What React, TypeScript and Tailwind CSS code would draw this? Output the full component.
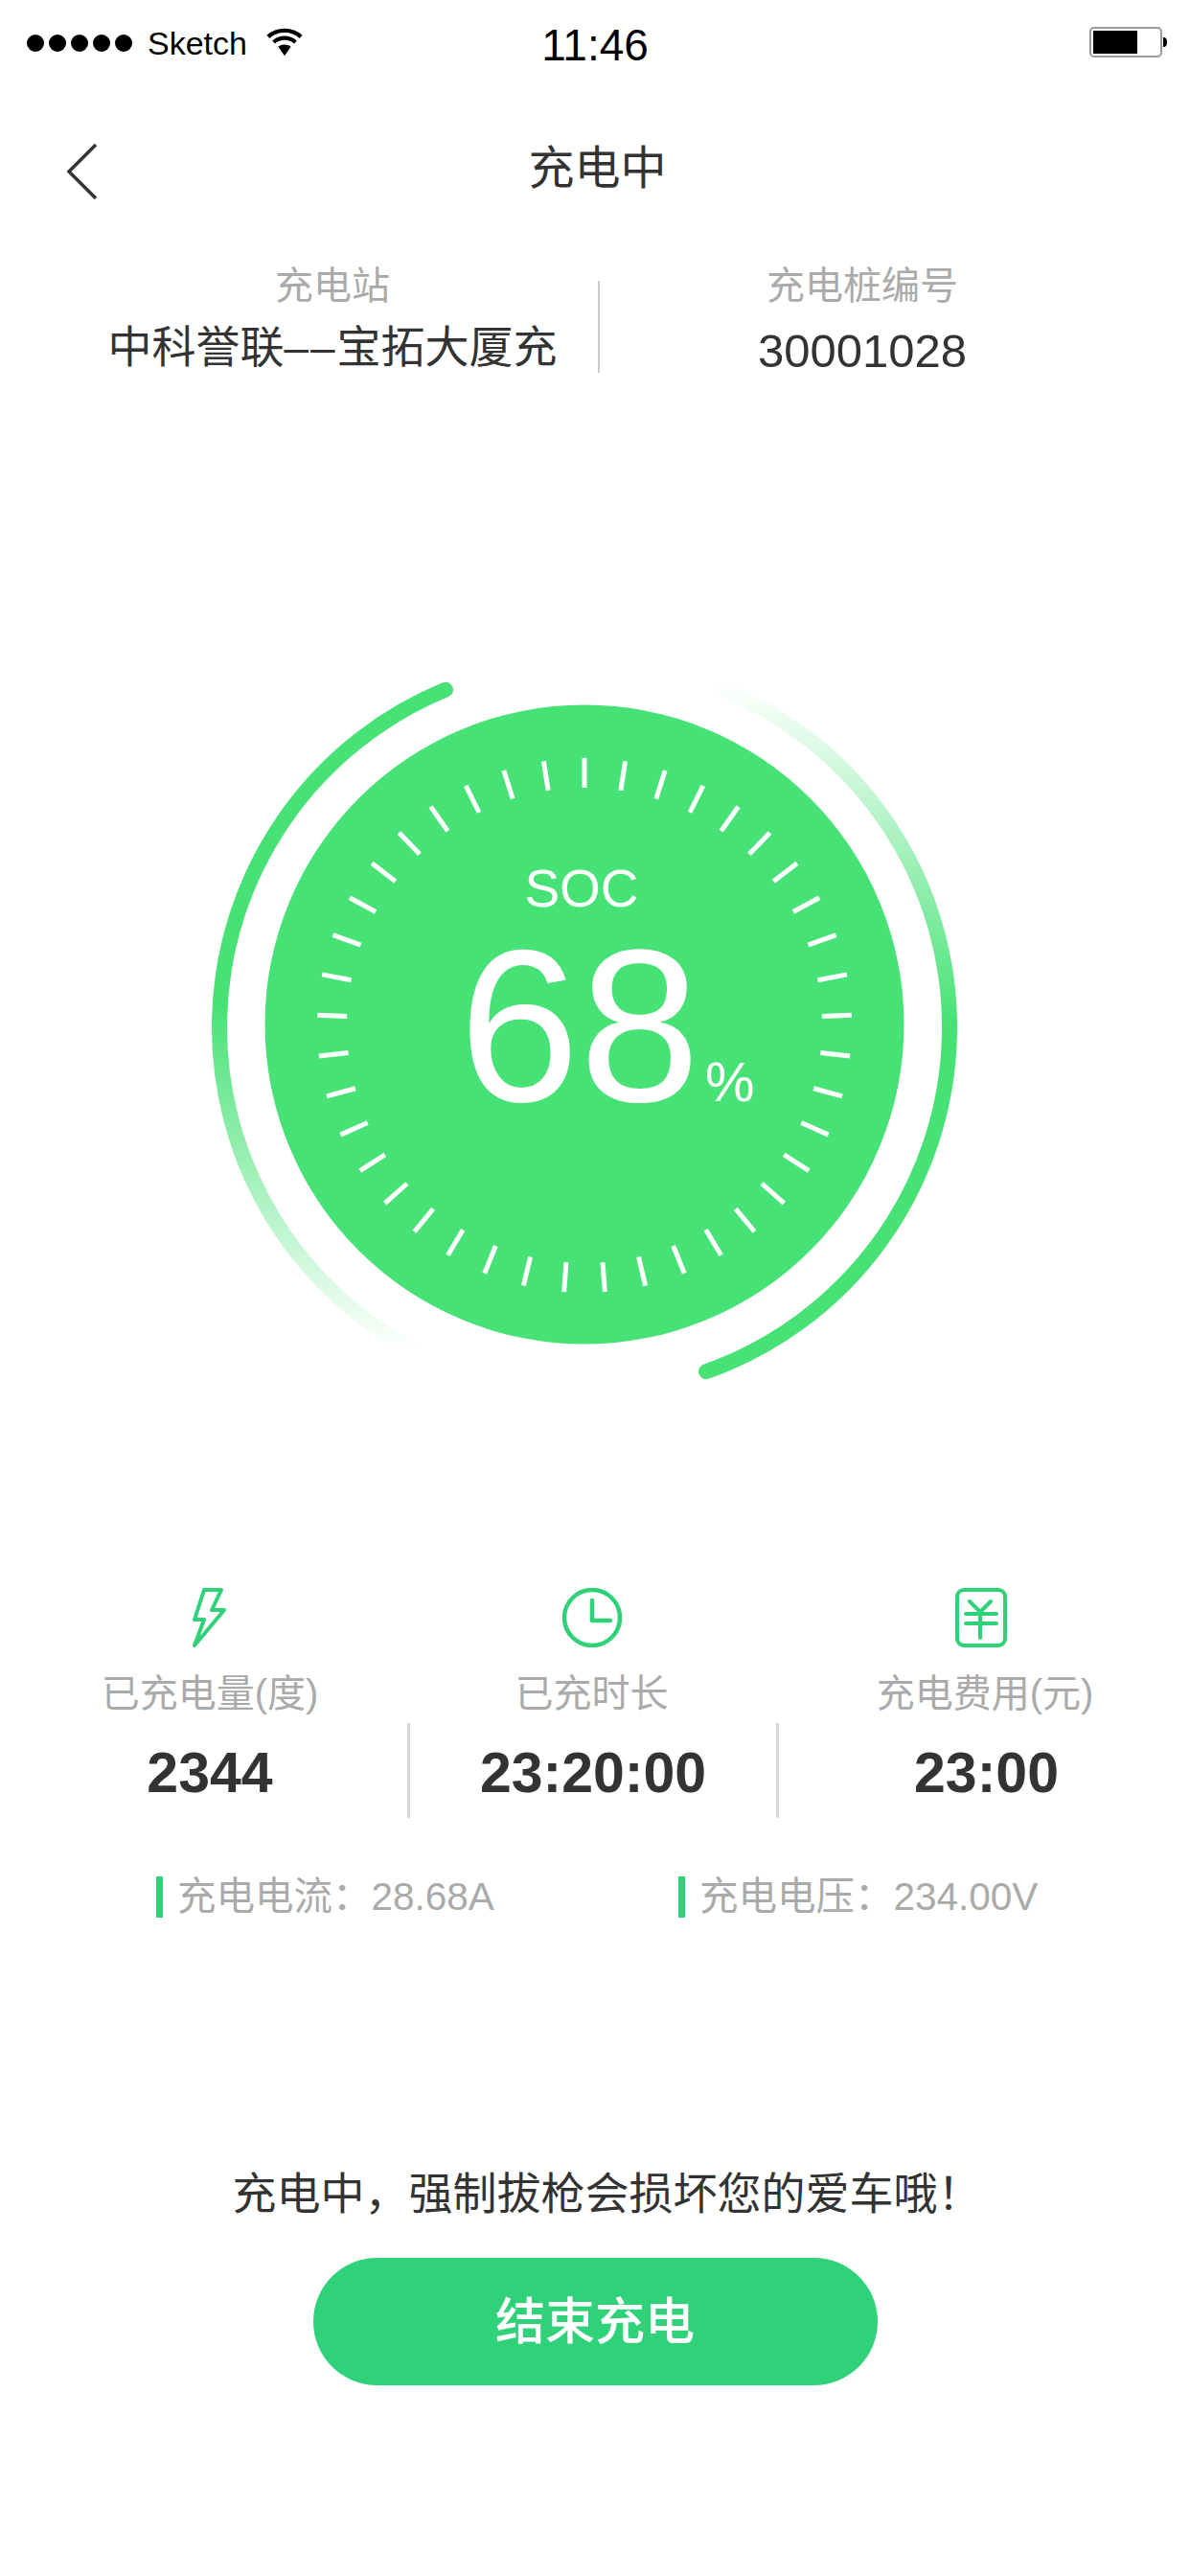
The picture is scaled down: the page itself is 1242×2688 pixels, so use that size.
const CX = 400;
const CY = 401;

const ticks = Array.from({ length: 41 }, (_, i) => (i * 360) / 41);

const polar = (deg: number, r: number) => {
  const a = (deg * Math.PI) / 180;
  return { x: CX + r * Math.sin(a), y: CY - r * Math.cos(a) };
};

const Gauge = () => (
  <div className="relative mt-[279px] ml-[210px] h-[800px] w-[800px] self-start">
    <svg width="800" height="800" viewBox="0 0 800 800" className="block">
      <defs>
        <linearGradient id="fadeLeft" gradientUnits="userSpaceOnUse" x1="0" y1="378" x2="0" y2="740">
          <stop offset="0" stopColor="#46e275" />
          <stop offset="1" stopColor="#46e275" stopOpacity="0" />
        </linearGradient>
        <linearGradient id="fadeRight" gradientUnits="userSpaceOnUse" x1="0" y1="400" x2="0" y2="45">
          <stop offset="0" stopColor="#46e275" />
          <stop offset="1" stopColor="#46e275" stopOpacity="0" />
        </linearGradient>
      </defs>
      <circle cx="400" cy="400" r="333.5" fill="#46e275" />
      {ticks.map((deg) => {
        const a = polar(deg, 248);
        const b = polar(deg, 279);
        return <line key={deg} x1={a.x} y1={a.y} x2={b.x} y2={b.y} stroke="#ffffff" strokeWidth="5" />;
      })}
      {/* left arc, fades out towards the bottom */}
      <path d="M 255 50.7 A 381 381 0 0 0 237 747.4" fill="none" stroke="url(#fadeLeft)" strokeWidth="16" strokeLinecap="round" />
      {/* right arc, fades out towards the top */}
      <path d="M 527 762.2 A 381 381 0 0 0 541 49" fill="none" stroke="url(#fadeRight)" strokeWidth="16" strokeLinecap="round" />
    </svg>
    <div className="absolute inset-0 text-white">
      <div className="absolute left-0 right-0 top-[228px] pr-[6px] text-center text-[55px] leading-[60px]">SOC</div>
      <div className="absolute left-[269px] top-[317px] text-[226px] leading-[170px]">68</div>
      <div className="absolute left-[526px] top-[430px] text-[58px] leading-[60px]">%</div>
    </div>
  </div>
);

const BoltIcon = () => (
  <svg width="36" height="62" viewBox="0 0 36 62" fill="none" stroke="#2fd278" strokeWidth="4" strokeLinejoin="round" className="block">
    <polygon points="12,2 30,2 20,23 33,23 2,60 12,33 2,33" />
  </svg>
);

const ClockIcon = () => (
  <svg width="62" height="62" viewBox="0 0 62 62" fill="none" stroke="#2fd278" strokeWidth="4.5" strokeLinecap="round" strokeLinejoin="round" className="block">
    <circle cx="31" cy="31" r="29" />
    <path d="M31 13V34H50" />
  </svg>
);

const YenIcon = () => (
  <svg width="54" height="62" viewBox="0 0 54 62" fill="none" stroke="#2fd278" strokeWidth="4" strokeLinecap="round" strokeLinejoin="round" className="mr-[8px] block">
    <rect x="2" y="2" width="50" height="58" rx="7" />
    <path d="M15 14L26 25L37 14M11 27H43M11 37H43M26 25V52" />
  </svg>
);

const StatusBar = () => (
  <div className="mt-[15px] grid h-[60px] grid-cols-[1fr_auto_1fr] items-center text-black">
    <div className="flex items-center pl-[28px]">
      <div className="flex gap-[5px]">
        {[0, 1, 2, 3, 4].map((i) => (
          <span key={i} className="h-[18px] w-[18px] rounded-full bg-black" />
        ))}
      </div>
      <span className="ml-[16px] text-[34px] leading-[40px]">Sketch</span>
      <svg width="38" height="30" viewBox="0 0 40 30" fill="none" stroke="#000" strokeWidth="4.5" className="ml-[20px] -mt-[2px] block">
        <path d="M2 9C12 0 28 0 38 9" />
        <path d="M8 15C15 9 25 9 32 15" />
        <path d="M20 30L13 20C17 17 23 17 27 20Z" fill="#000" stroke="none" />
      </svg>
    </div>
    <span className="mt-[3px] text-[46px] leading-[50px]">11:46</span>
    <div className="flex justify-end pr-[24px]">
      <svg width="81" height="32" viewBox="0 0 81 32" className="-mt-[2px] block">
        <rect x="1" y="1" width="74" height="30" rx="4" fill="none" stroke="#9a9a9a" strokeWidth="2" />
        <rect x="4" y="4" width="46" height="24" fill="#000" />
        <path d="M77 11C80 11 81 13 81 16C81 19 80 21 77 21Z" fill="#000" />
      </svg>
    </div>
  </div>
);

const Reading = ({ text, className }: { text: string; className: string }) => (
  <div className={`flex h-[43px] items-center ${className}`}>
    <span className="h-full w-[7px] bg-[#2fd278]" />
    <span className="ml-[15px] text-[40.5px] leading-[43px] text-[#aaaaaa]">{text}</span>
  </div>
);

export default function App() {
  return (
    <div className="flex h-[2688px] w-[1242px] flex-col overflow-hidden bg-white font-['Liberation_Sans','Noto_Sans_CJK_SC',sans-serif]">
      <StatusBar />

      <div className="mt-[56px] grid h-[90px] grid-cols-[1fr_auto_1fr] items-center">
        <svg width="34" height="60" viewBox="0 0 34 60" fill="none" stroke="#333" strokeWidth="3.5" className="mt-[6px] ml-[69px] block">
          <path d="M31 2L3 30L31 58" />
        </svg>
        <h1 className="ml-[5px] text-[48px] leading-[60px] font-normal text-[#333333]">充电中</h1>
        <span />
      </div>

      {/* station info */}
      <div className="mt-[53px] grid grid-cols-[624px_2px_1fr]">
        <div className="pl-[70px] text-center">
          <div className="text-[40px] leading-[48px] text-[#aaaaaa]">充电站</div>
          <div className="mt-[16px] text-[46px] leading-[48px] text-[#333333]">
            中科誉联<span className="tracking-[2px]">––</span>宝拓大厦充
          </div>
        </div>
        <div className="mt-[19px] h-[96px] bg-[#cccccc]" />
        <div className="pr-[68px] text-center">
          <div className="text-[40px] leading-[48px] text-[#aaaaaa]">充电桩编号</div>
          <div className="mt-[20px] text-[49px] leading-[48px] text-[#333333]">30001028</div>
        </div>
      </div>

      <Gauge />

      {/* stats */}
      <div className="mt-[188px] grid grid-cols-[425px_385px_432px] gap-y-[8px]">
        <div className="flex flex-col items-center pl-[13px]">
          <BoltIcon />
          <div className="mt-[24px] text-[40px] leading-[48px] text-[#aaaaaa]">已充电量(度)</div>
        </div>
        <div className="flex flex-col items-center">
          <ClockIcon />
          <div className="mt-[24px] text-[40px] leading-[48px] text-[#aaaaaa]">已充时长</div>
        </div>
        <div className="flex flex-col items-center pl-[4px]">
          <YenIcon />
          <div className="mt-[24px] text-[40px] leading-[48px] text-[#aaaaaa]">充电费用(元)</div>
        </div>
        <div className="-mt-[1px] flex h-[99px] items-center justify-center pt-[5px] pl-[13px] text-[59px] font-bold text-[#333333]">2344</div>
        <div className="-mt-[1px] flex h-[99px] items-center justify-center border-l-[3px] border-[#d8d8d8] pt-[5px] text-[59px] font-bold text-[#333333]">23:20:00</div>
        <div className="-mt-[1px] flex h-[99px] items-center justify-center border-l-[3px] border-[#d8d8d8] pt-[5px] pl-[4px] text-[59px] font-bold text-[#333333]">23:00</div>
      </div>

      <div className="mt-[61px] flex pl-[163px]">
        <Reading text="充电电流：28.68A" className="w-[545px]" />
        <Reading text="充电电压：234.00V" className="" />
      </div>

      <p className="mt-[258px] pl-[25px] text-center text-[46px] leading-[60px] text-[#333333]">充电中，强制拔枪会损坏您的爱车哦！</p>

      <button type="button" className="mt-[37px] h-[133px] w-[589px] self-center rounded-full bg-[#2fd278] text-[52px] font-medium text-white">
        结束充电
      </button>
    </div>
  );
}
